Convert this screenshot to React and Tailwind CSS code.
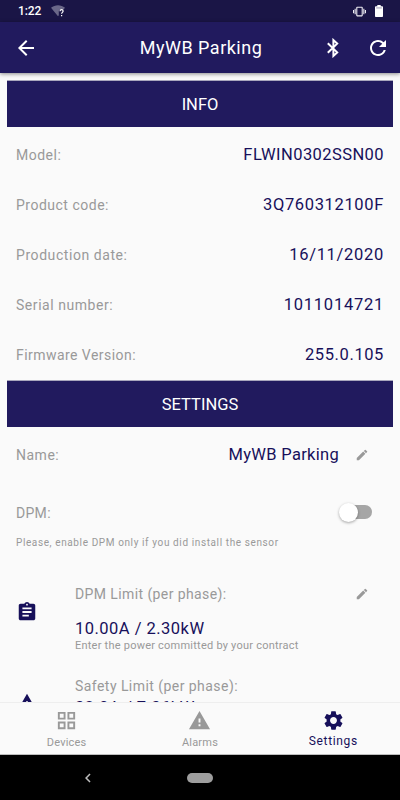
import {
  MdArrowBack,
  MdAssignment,
  MdChevronLeft,
  MdEdit,
  MdOutlineGridView,
  MdRefresh,
  MdSettings,
  MdVibration,
  MdWarning,
} from 'react-icons/md';

const infoRows = [
  { label: 'Model:', value: 'FLWIN0302SSN00', labelClass: 'tracking-[0.5px]', valueClass: 'tracking-[0.42px]' },
  { label: 'Product code:', value: '3Q760312100F', labelClass: 'tracking-[0.5px]', valueClass: 'tracking-[0.65px]' },
  { label: 'Production date:', value: '16/11/2020', labelClass: 'tracking-[0.57px]', valueClass: 'tracking-[0.7px]' },
  { label: 'Serial number:', value: '1011014721', labelClass: 'tracking-[0.55px]', valueClass: 'tracking-[0.75px]' },
  { label: 'Firmware Version:', value: '255.0.105', labelClass: 'tracking-[0.45px]', valueClass: 'tracking-[0.6px]' },
];

const WifiUnknownIcon = () => (
  <svg className="ml-[10px] h-[13px] w-[14px]" viewBox="0 0 14 13">
    <path d="M0 2.8C4-.7 10-.7 14 2.8L12.6 4.5H9.2L7.8 6v4.2L7 11.2z" fill="#6b6889" />
    <path
      d="M9 6.2c.1-1 .7-1.5 1.6-1.5s1.5.6 1.5 1.4c0 1.3-1.5 1.3-1.5 2.7M10.6 9.9v1.3"
      fill="none"
      stroke="#ffffff"
      strokeWidth="1.2"
    />
  </svg>
);

const BatteryIcon = () => (
  <svg className="ml-[9px] h-[12px] w-[8px]" viewBox="0 0 8 12" fill="#ffffff">
    <path d="M2.3 0h3.4v1.2H7.2c.5 0 .8.3.8.8v9.2c0 .5-.3.8-.8.8H.8c-.5 0-.8-.3-.8-.8V2c0-.5.3-.8.8-.8h1.5z" />
    <path d="M1.2 2.2h5.6v1.4H1.2z" fill="#b9b7c9" />
  </svg>
);

const BluetoothIcon = () => (
  <svg className="ml-[39px] h-[20px] w-[14px]" viewBox="0 0 14 20" fill="none" stroke="#ffffff" strokeWidth="2">
    <path d="M1.8 5.2 11.2 14.4 7.4 17.9V2.1l3.8 3.5-9.4 9.2" />
  </svg>
);

const StatusBar = () => (
  <div className="flex h-[22px] shrink-0 items-center bg-[#1a1546] pl-[18px] pr-[17px] text-white">
    <span className="text-[12px] font-medium leading-none tracking-[-0.1px]">1:22</span>
    <WifiUnknownIcon />
    <MdVibration className="ml-auto h-[13px] w-[13px] text-[#eeedf3]" />
    <BatteryIcon />
  </div>
);

const Header = () => (
  <header className="z-10 flex h-[51px] shrink-0 items-center bg-[#211a5e] pl-[14px] pr-[10px] text-white shadow-[0_1px_4px_rgba(0,0,0,0.45)]">
    <MdArrowBack className="h-6 w-6" />
    <h1 className="flex-1 pl-[77px] pt-px text-center text-[18px] leading-none tracking-[0.5px]">MyWB Parking</h1>
    <BluetoothIcon />
    <MdRefresh className="ml-[26px] h-6 w-6" />
  </header>
);

const Banner = ({ children }) => (
  <div className="mx-[7px] flex h-[47px] items-center justify-center border-t border-[#a9a7bd] bg-[#211a5e] pt-[2px] text-[16.5px] leading-none text-white">
    {children}
  </div>
);

const TabItem = ({ icon: Icon, label, active }) => (
  <div className={`flex flex-1 flex-col items-center pt-[6px] ${active ? 'text-[#17105a]' : 'text-[#999999]'}`}>
    <Icon className="h-[23px] w-[23px]" />
    <span
      className={
        active
          ? 'mt-[2px] text-[12px] leading-[14px] tracking-[0.65px]'
          : 'mt-[4px] text-[11px] leading-[13px] tracking-[0.2px]'
      }
    >
      {label}
    </span>
  </div>
);

const App = () => {
  return (
    <div className="flex h-[800px] w-[400px] flex-col overflow-hidden bg-[#fafafa] font-['Roboto',sans-serif]">
      <StatusBar />
      <Header />

      <main className="min-h-0 flex-1 overflow-hidden pt-[7px]">
        <Banner>INFO</Banner>
        <div className="pt-[3px]">
          {infoRows.map(row => (
            <div key={row.label} className="flex h-[50px] items-center justify-between px-4 leading-none">
              <span className={`text-[14px] text-[#999999] ${row.labelClass}`}>{row.label}</span>
              <span className={`text-[16.5px] text-[#17105a] ${row.valueClass}`}>{row.value}</span>
            </div>
          ))}
        </div>

        <Banner>SETTINGS</Banner>
        <div className="flex h-[56px] items-center pl-4 pr-[31px] leading-none">
          <span className="text-[14px] tracking-[0.5px] text-[#999999]">Name:</span>
          <span className="ml-auto text-[16.5px] tracking-[0.3px] text-[#17105a]">MyWB Parking</span>
          <MdEdit className="mb-px ml-[16px] h-[14px] w-[14px] text-[#999999]" />
        </div>

        <div className="flex h-[58px] items-center justify-between pl-4 pr-[28px]">
          <span className="pt-[2px] text-[14px] leading-none tracking-[0.3px] text-[#999999]">DPM:</span>
          <div className="flex h-[14px] w-[32px] items-center rounded-full bg-[#a6a6a6]">
            <div className="-ml-px h-[19px] w-[19px] shrink-0 rounded-full bg-white shadow-[0_1px_3px_rgba(0,0,0,0.35)]" />
          </div>
        </div>
        <p className="-mt-[4px] pl-4 text-[10px] leading-[12px] tracking-[0.61px] text-[#999999]">
          Please, enable DPM only if you did install the sensor
        </p>

        <div className="mt-[36px] flex pl-4 pr-[31px]">
          <MdAssignment className="mt-[16px] h-[22px] w-[22px] text-[#17105a]" />
          <div className="ml-[37px] flex-1 text-[#999999]">
            <div className="text-[14px] leading-[18px] tracking-[0.4px]">DPM Limit (per phase):</div>
            <div className="mt-[16px] text-[16.5px] leading-[20px] tracking-[0.48px] text-[#17105a]">
              10.00A / 2.30kW
            </div>
            <div className="text-[11px] leading-[14px] tracking-[0.23px]">
              Enter the power committed by your contract
            </div>
          </div>
          <MdEdit className="mt-[2px] h-[14px] w-[14px] text-[#999999]" />
        </div>

        <div className="mt-[24px] flex pl-4">
          <MdWarning className="mt-[15px] h-[22px] w-[22px] text-[#17105a]" />
          <div className="ml-[37px]">
            <div className="text-[14px] leading-[18px] tracking-[0.45px] text-[#999999]">Safety Limit (per phase):</div>
            <div className="mt-[3px] text-[16.5px] leading-[20px] tracking-[0.48px] text-[#17105a]">
              32.0A / 7.36kW
            </div>
          </div>
        </div>
      </main>

      <nav className="flex h-[53px] shrink-0 border-y border-t-[#eeeeee] border-b-[#bdbdbd] bg-[#fafafa]">
        <TabItem icon={MdOutlineGridView} label="Devices" />
        <TabItem icon={MdWarning} label="Alarms" />
        <TabItem icon={MdSettings} label="Settings" active />
      </nav>

      <div className="flex h-[45px] shrink-0 items-center bg-black pl-[79px]">
        <MdChevronLeft className="h-[18px] w-[18px] text-[#bdbdbd]" />
        <div className="ml-[90px] h-[10px] w-[26px] rounded-full bg-[#9e9e9e]" />
      </div>
    </div>
  );
};

export default App;
